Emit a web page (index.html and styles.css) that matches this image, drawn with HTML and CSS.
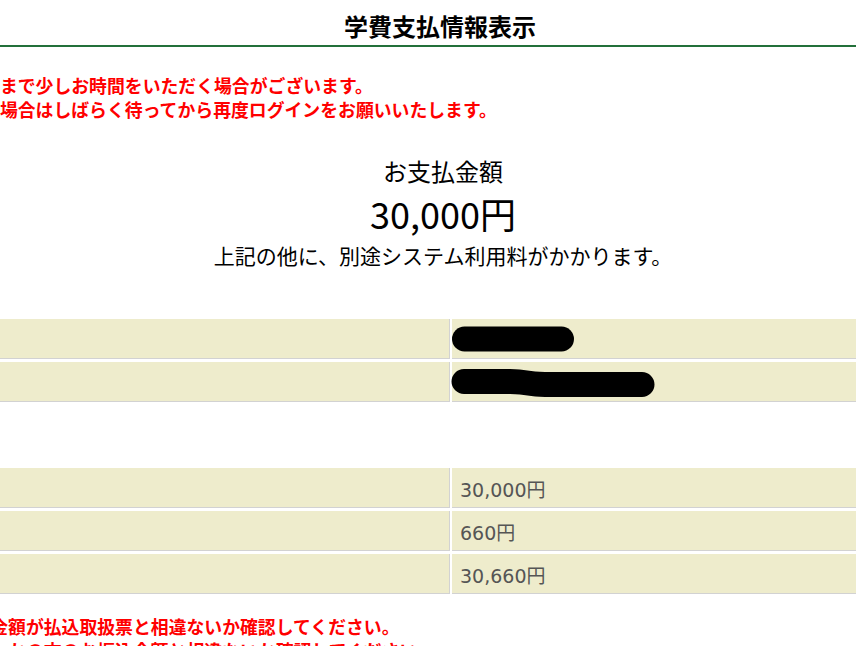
FILE: index.html
```html
<!DOCTYPE html>
<html lang="ja">
<head>
<meta charset="utf-8">
<title>学費支払情報表示</title>
<link rel="stylesheet" href="styles.css">
</head>
<body>
<div class="page">
  <h1 class="title">学費支払情報表示</h1>

  <div class="notes notes-top">
    <p>支払情報の表示まで少しお時間をいただく場合がございます。</p>
    <p>画面が開かない場合はしばらく待ってから再度ログインをお願いいたします。</p>
  </div>

  <section class="summary">
    <div class="summary-label">お支払金額</div>
    <div class="summary-amount">30,000円</div>
    <div class="summary-note">上記の他に、別途システム利用料がかかります。</div>
  </section>

  <div class="rows rows-student">
    <div class="cell cell-label">学籍番号</div>
    <div class="cell cell-value">
      <svg class="redact redact-short" width="126" height="26" viewBox="0 0 126 26" aria-hidden="true">
        <rect x="1" y="0.5" width="122" height="25" rx="12.5" fill="#000"/>
      </svg>
    </div>
    <div class="cell cell-label">氏名</div>
    <div class="cell cell-value">
      <svg class="redact redact-long" width="206" height="30" viewBox="0 0 206 30" aria-hidden="true">
        <path d="M14 1 L60 1 C75 1 80 4 95 4 L192 4 A12.5 12.5 0 0 1 192 29 L95 29 C80 29 75 26 60 26 L14 26 A12.5 12.5 0 0 1 14 1 Z" fill="#000"/>
      </svg>
    </div>
  </div>

  <div class="rows rows-fees">
    <div class="cell cell-label">学費</div>
    <div class="cell cell-value">30,000円</div>
    <div class="cell cell-label">システム利用料</div>
    <div class="cell cell-value">660円</div>
    <div class="cell cell-label">合計</div>
    <div class="cell cell-value">30,660円</div>
  </div>

  <div class="notes notes-bottom">
    <p>上記の支払金額が払込取扱票と相違ないか確認してください。</p>
    <p>また、いずれかの方のお振込金額と相違ないか確認してください。</p>
  </div>
</div>
</body>
</html>
```

FILE: styles.css
```css
html, body {
  margin: 0;
  padding: 0;
  background: #fff;
  overflow: hidden;
}

body {
  font-family: "Noto Sans CJK JP", "Noto Sans", sans-serif;
  color: #000;
}

/* wide page, scrolled so its left part sits outside the window */
.page {
  width: 1300px;
  margin-left: -210px;
}

.title {
  margin: 0;
  padding: 10px 0 3px;
  font-size: 24px;
  line-height: 32px;
  font-weight: 700;
  text-align: center;
  border-bottom: 2px solid #23703a;
}

.notes {
  color: #ff0000;
  font-weight: 700;
  font-size: 17.85px;
  line-height: 24px;
}

.notes p {
  margin: 0;
  white-space: nowrap;
}

.notes-top {
  margin-top: 26px;
  padding-left: 85px;
}

.notes-bottom {
  margin-top: 17px;
  padding-left: 111px;
}

.summary {
  text-align: center;
  margin-top: 33px;
  padding-left: 6px;
}

.summary-label {
  font-size: 24px;
  line-height: 34px;
}

.summary-amount {
  font-size: 36px;
  line-height: 48px;
  margin-top: 1px;
}

.summary-note {
  font-size: 21px;
  line-height: 30px;
  margin-top: 3px;
}

.rows {
  display: grid;
  grid-template-columns: 658px 1fr;
  column-gap: 2px;
  row-gap: 3px;
  padding: 3px 2px;
}

.rows-student {
  margin-top: 46px;
}

.rows-fees {
  margin-top: 60px;
}

.cell {
  box-sizing: border-box;
  height: 40px;
  background: #eeeccc;
  border-right: 1px solid #d2d2d2;
  border-bottom: 1px solid #d2d2d2;
  padding: 1px 8px 0;
  display: flex;
  align-items: center;
}

.cell-label {
  color: #555;
  font-size: 17.6px;
}

.cell-value {
  position: relative;
  color: #555;
  font-family: "DejaVu Sans", "Noto Sans CJK JP", sans-serif;
  font-size: 19px;
}

.redact {
  position: absolute;
  display: block;
}

.redact-short {
  left: -1px;
  top: 7px;
}

.redact-long {
  left: -2px;
  top: 6px;
}
```
